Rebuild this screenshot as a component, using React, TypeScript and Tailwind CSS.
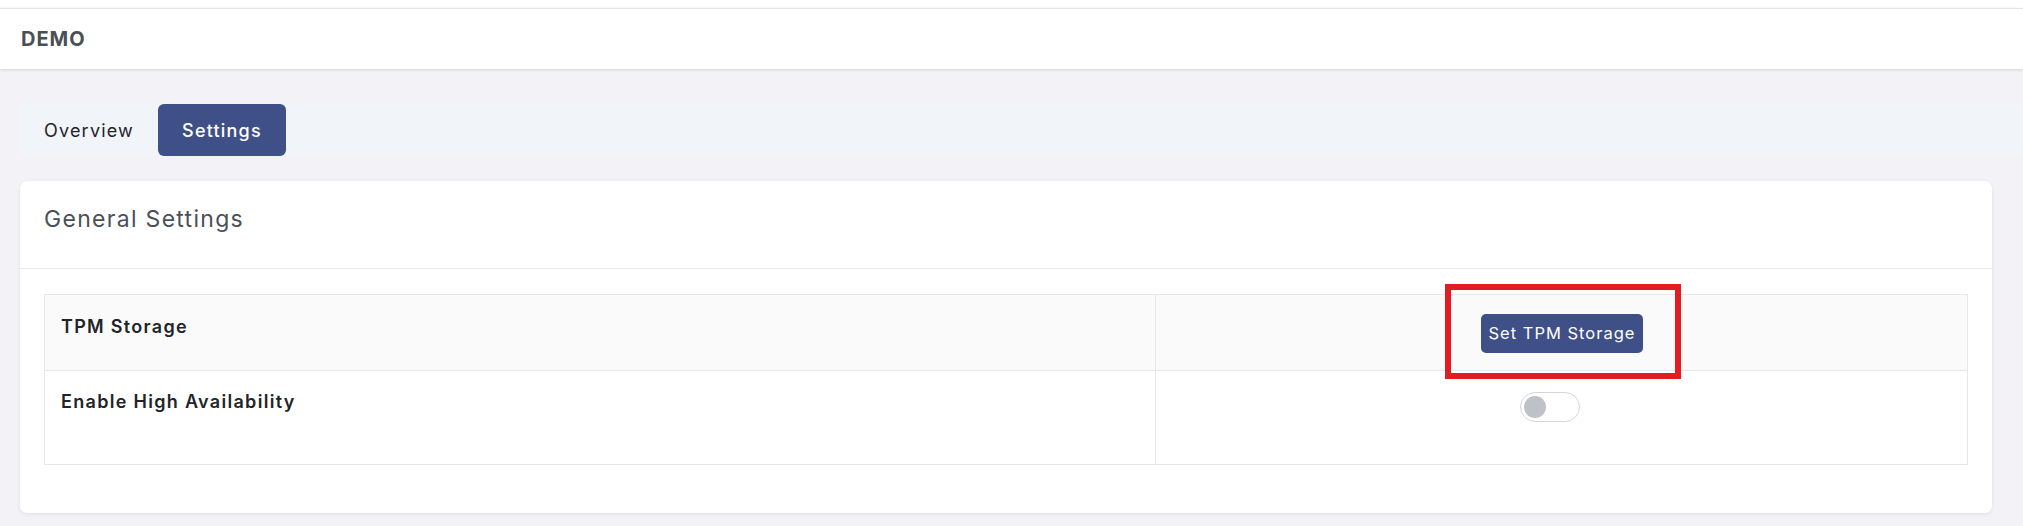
import React from 'react';

function Toggle() {
  return (
    <div className="flex h-[30px] w-[60px] items-center rounded-full border border-[#d3d6dc] bg-white px-[3px]">
      <div className="h-[22px] w-[22px] rounded-full bg-[#bfc1c8]" />
    </div>
  );
}

export default function App() {
  return (
    <div className="min-h-[526px] w-full bg-[#f2f2f7] font-['Inter','Liberation_Sans',sans-serif]">
      {/* top bar */}
      <div className="h-[8px] bg-white" />
      <div className="flex h-[61px] items-center border-t border-[#e4e4ea] bg-white px-[21px] shadow-[0_1px_3px_rgba(0,0,0,0.12)]">
        <span className="text-[20px] font-bold tracking-[1px] text-[#4a4f57]">DEMO</span>
      </div>

      {/* tabs */}
      <div className="ml-[20px] mt-[35px] flex h-[52px] items-stretch bg-[#f1f4f8]">
        <button className="px-[24px] text-[18px] tracking-[1.2px] text-[#1f2328]">Overview</button>
        <button className="rounded-[6px] bg-[#3f5088] px-[24px] text-[18px] font-medium tracking-[1.2px] text-white">
          Settings
        </button>
      </div>

      {/* card */}
      <div className="ml-[20px] mr-[31px] mt-[25px] rounded-[7px] bg-white shadow-[0_1px_4px_rgba(0,0,0,0.08)]">
        <div className="h-[88px] border-b border-[#e9eaee] px-[24px] pt-[20px]">
          <h2 className="text-[23px] leading-[36px] tracking-[1.3px] text-[#4a505a]">General Settings</h2>
        </div>
        <div className="px-[24px] pb-[48px] pt-[25px]">
          <div className="grid grid-cols-[1111px_1fr] border border-[#e6e7ea]">
            {/* row 1 */}
            <div className="h-[76px] border-b border-r border-[#e6e7ea] bg-[#fafafa] pl-[16px] pt-[18px]">
              <span className="text-[18px] font-semibold leading-[27px] tracking-[1.3px] text-[#212529]">TPM Storage</span>
            </div>
            <div className="h-[76px] border-b border-[#e6e7ea] bg-[#fafafa] pl-[325px] pt-[19px]">
              <div className="relative w-[162px]">
                <button className="h-[39px] w-[162px] rounded-[5px] bg-[#3f5088] text-[16.5px] tracking-[1px] text-white">
                  Set TPM Storage
                </button>
                <div className="absolute -left-[36px] -top-[30px] h-[95px] w-[236px] border-[6px] border-[#e31b23]" />
              </div>
            </div>
            {/* row 2 */}
            <div className="h-[93px] border-r border-[#e6e7ea] pl-[16px] pt-[17px]">
              <span className="text-[18px] font-semibold leading-[27px] tracking-[1.3px] text-[#212529]">
                Enable High Availability
              </span>
            </div>
            <div className="h-[93px] pl-[364px] pt-[21px]">
              <Toggle />
            </div>
          </div>
        </div>
      </div>
    </div>
  );
}
